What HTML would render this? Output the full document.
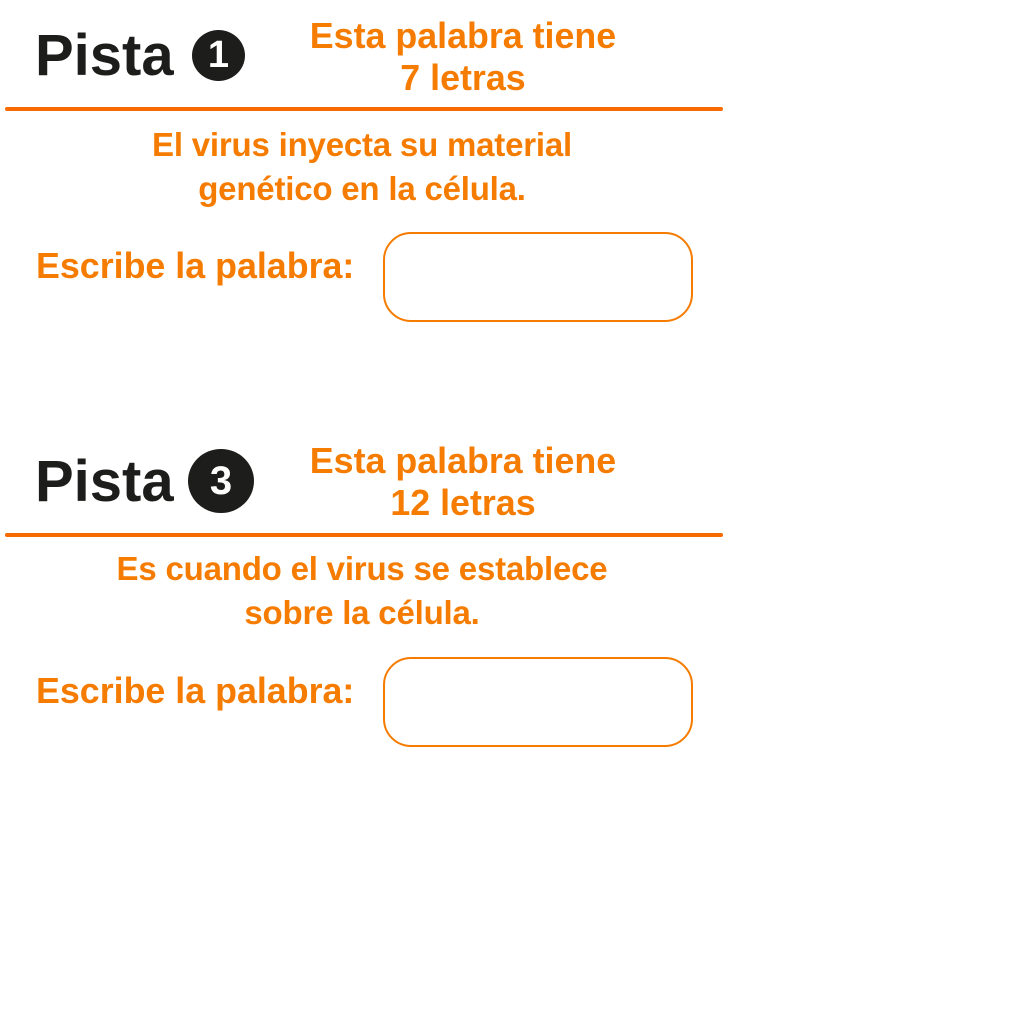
<!DOCTYPE html>
<html><head><meta charset="utf-8"><style>
body{margin:0;width:1024px;height:1024px;background:#fff;position:relative;overflow:hidden;font-family:"Liberation Sans",sans-serif}
.a{position:absolute;white-space:nowrap}
.p{font-size:58px;font-weight:bold;color:#1d1d1b;left:35px}
.c{position:absolute;background:#1d1d1b;border-radius:50%;color:#fff;font-weight:bold;text-align:center}
.h{color:#f57c00;font-weight:bold;font-size:35.8px;text-align:center;width:400px;left:263px;line-height:42px}
.ln{position:absolute;left:5px;width:718px;height:4px;background:#f76a00;border-radius:2px}
.d{color:#f57c00;font-weight:bold;font-size:33px;text-align:center;width:600px;left:62px;line-height:44px;letter-spacing:-0.2px}
.e{color:#f57c00;font-weight:bold;font-size:35.8px;left:36px}
.b{position:absolute;left:383px;width:306px;height:86px;border:2.5px solid #f57c00;border-radius:28px}
</style></head><body>
<div class="a p" style="top:22px">Pista</div>
<div class="c" style="left:192px;top:30px;width:53px;height:51px;font-size:38px;line-height:51px">1</div>
<div class="a h" style="top:15px">Esta palabra tiene<br>7 letras</div>
<div class="ln" style="top:107px"></div>
<div class="a d" style="top:123px">El virus inyecta su material<br>genético en la célula.</div>
<div class="a e" style="top:246px">Escribe la palabra:</div>
<div class="b" style="top:232px"></div>

<div class="a p" style="top:448px">Pista</div>
<div class="c" style="left:188px;top:449px;width:66px;height:64px;font-size:40px;line-height:64px">3</div>
<div class="a h" style="top:440px">Esta palabra tiene<br>12 letras</div>
<div class="ln" style="top:533px"></div>
<div class="a d" style="top:547px">Es cuando el virus se establece<br>sobre la célula.</div>
<div class="a e" style="top:671px">Escribe la palabra:</div>
<div class="b" style="top:657px"></div>
</body></html>
